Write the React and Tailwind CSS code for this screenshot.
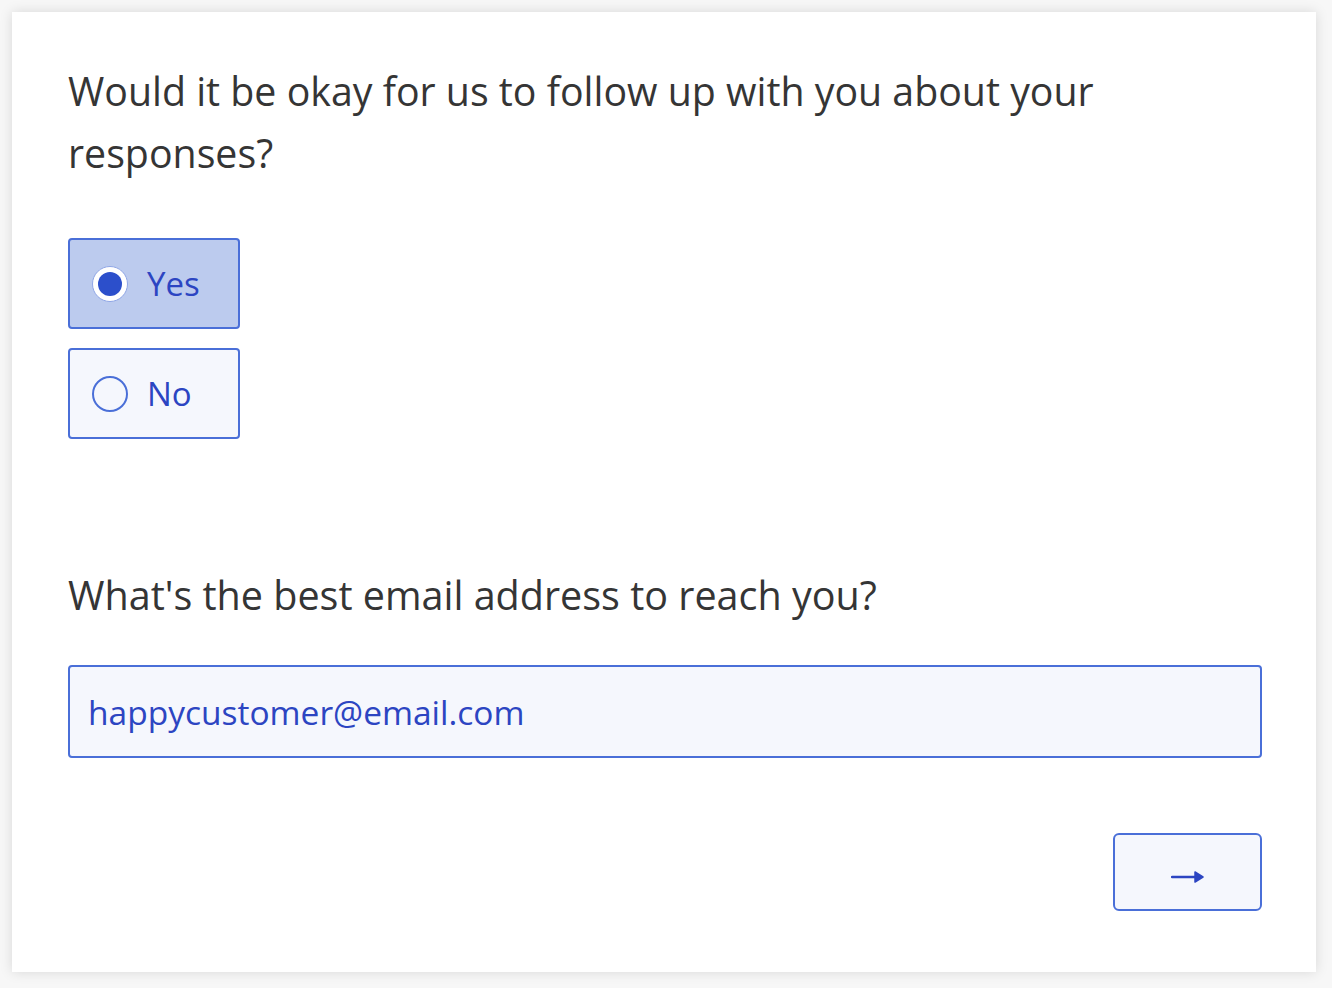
import React, { useState } from 'react';

const Choice = ({ label, selected, onClick }) => (
  <button
    onClick={onClick}
    className={`flex h-[91px] w-[172px] items-center gap-[19px] rounded-[4px] border-2 border-[#4a6fd8] pl-[22px] text-left ${
      selected ? 'bg-[#bccbee]' : 'bg-[#f5f7fd]'
    }`}
  >
    <span
      className={`flex h-[36px] w-[36px] items-center justify-center rounded-full ${
        selected ? 'border border-[#8fa6e6] bg-white' : 'border-2 border-[#4a6fd8] bg-[#f5f7fd]'
      }`}
    >
      {selected && <span className="h-[24px] w-[24px] rounded-full bg-[#2c4fcb]" />}
    </span>
    <span className="text-[33px] text-[#2c45c2]">{label}</span>
  </button>
);

export default function App() {
  const [answer, setAnswer] = useState('yes');
  const [email, setEmail] = useState('happycustomer@email.com');

  return (
    <div className="min-h-screen bg-[#f7f7f7] p-3 font-['Open_Sans',sans-serif]">
      <div className="h-[960px] w-[1304px] bg-white px-14 pt-12 shadow-[0_0_12px_rgba(0,0,0,0.13)]">
        <h2 className="w-[1120px] text-[39.3px] leading-[62px] text-[#353535]">
          Would it be okay for us to follow up with you about your responses?
        </h2>

        <div className="mt-[54px] flex flex-col gap-[19px]">
          <Choice label="Yes" selected={answer === 'yes'} onClick={() => setAnswer('yes')} />
          <Choice label="No" selected={answer === 'no'} onClick={() => setAnswer('no')} />
        </div>

        <h2 className="mt-[125px] text-[39.5px] leading-[62px] text-[#353535]">
          What's the best email address to reach you?
        </h2>

        <input
          value={email}
          onChange={(e) => setEmail(e.target.value)}
          className="mt-[39px] h-[93px] w-[1194px] rounded-[4px] border-2 border-[#4a6fd8] bg-[#f5f7fd] px-[18px] text-[33.5px] text-[#2c45c2] outline-none"
        />

        <div className="mt-[75px] flex w-[1194px] justify-end">
          <button className="flex h-[78px] w-[149px] items-center justify-center rounded-[6px] border-2 border-[#4a6fd8] bg-[#f5f7fd] pt-[9px] text-[#2c45c2]">
            <svg width="34" height="16" viewBox="0 0 34 16" fill="none">
              <path d="M1 8h28" stroke="currentColor" strokeWidth="2.5" strokeLinecap="round" />
              <path d="M24 3l8 5-8 5z" fill="currentColor" stroke="currentColor" strokeWidth="1.5" strokeLinejoin="round" />
            </svg>
          </button>
        </div>
      </div>
    </div>
  );
}
